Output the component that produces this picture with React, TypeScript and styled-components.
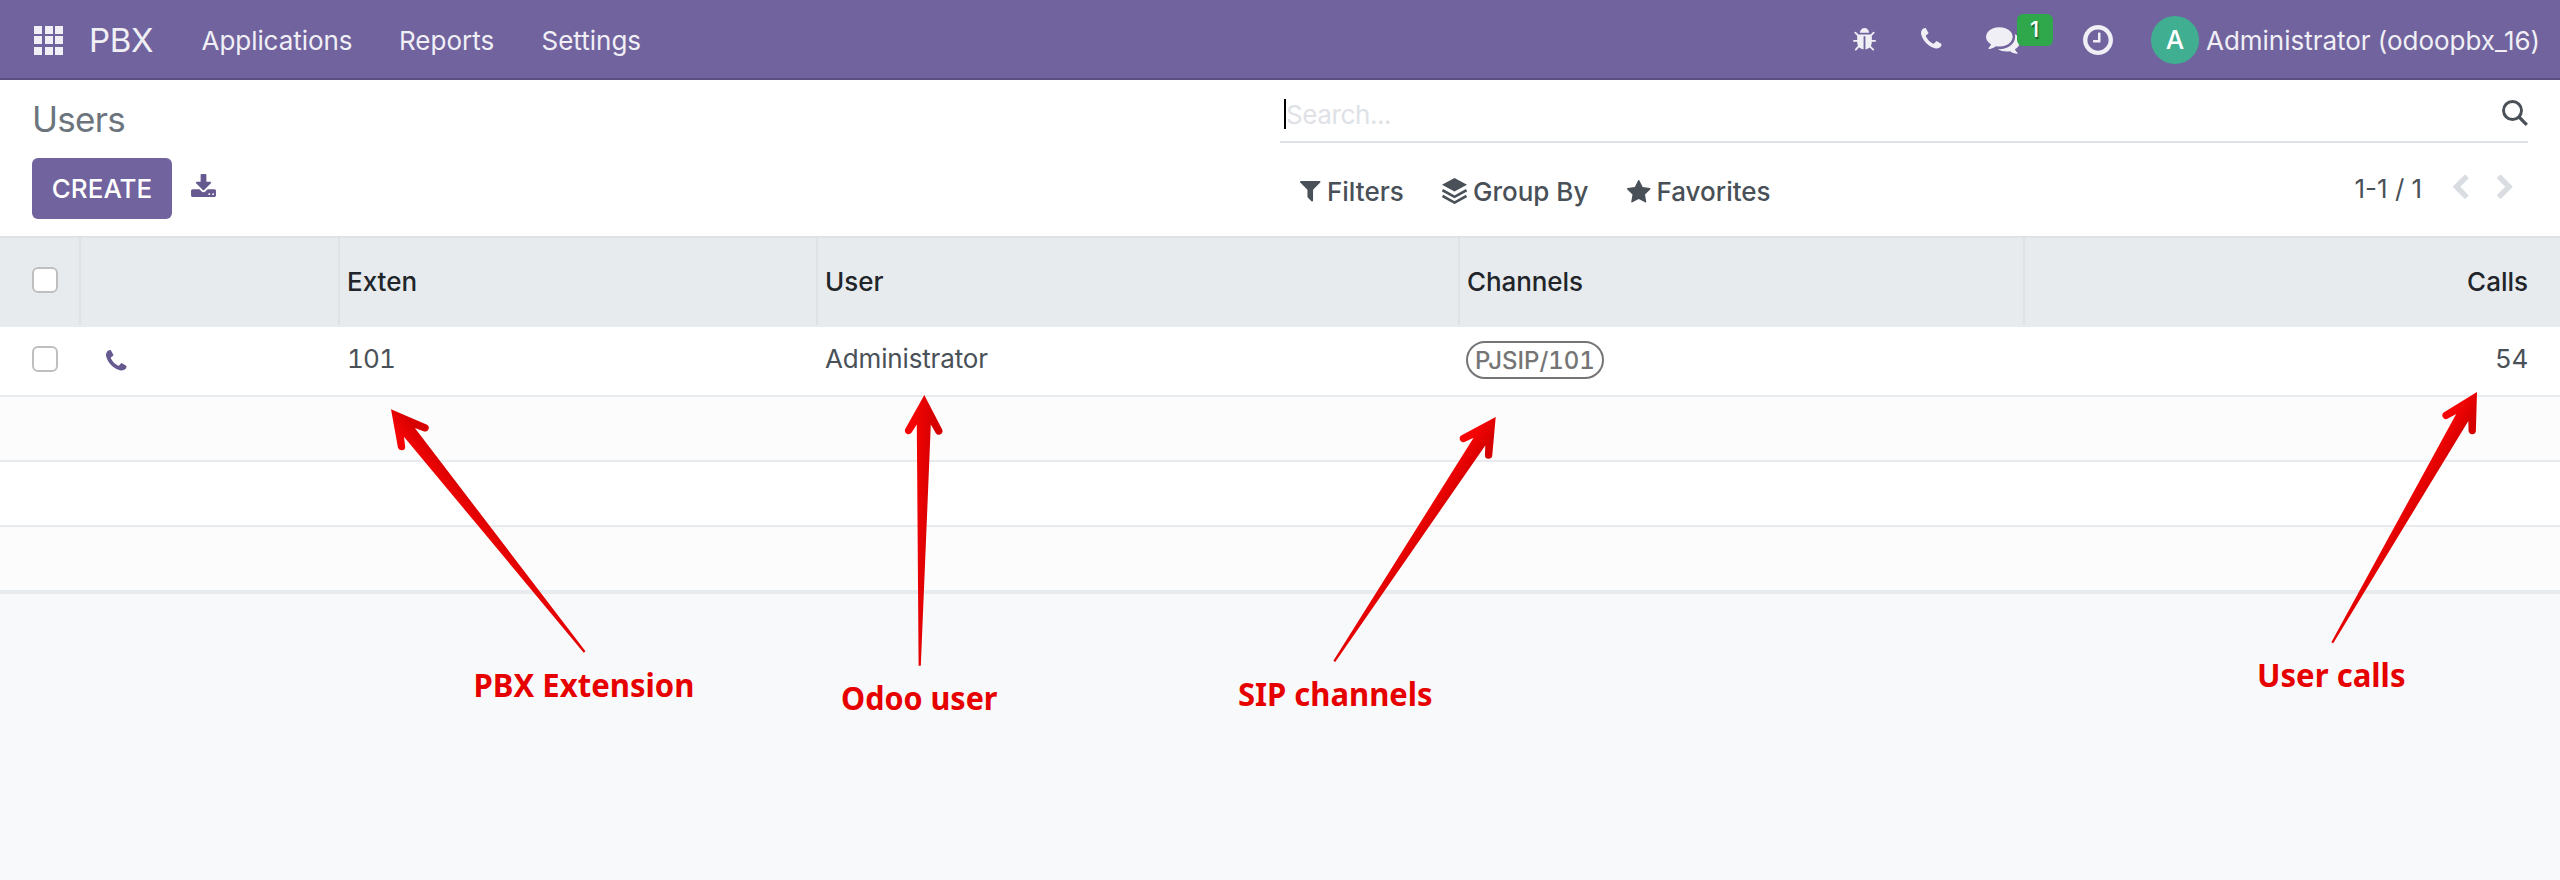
import React from "react";
import styled, { createGlobalStyle } from "styled-components";

const GlobalStyle = createGlobalStyle`
  *, *::before, *::after { box-sizing: border-box; }
  body {
    margin: 0;
    background: #f8f9fb;
    font-family: Inter, "Liberation Sans", sans-serif;
    font-size: 26px;
    color: #495057;
  }
`;

const Page = styled.div`
  position: relative;
  display: flex;
  flex-direction: column;
  height: 880px;
  overflow: hidden;
`;

const NavBar = styled.header`
  display: flex;
  align-items: center;
  height: 80px;
  padding: 2px 20px 0 34px;
  background: #71639e;
  border-bottom: 2px solid #5a4f7f;
  color: #f0eff5;
`;

const AppsGrid = styled.div`
  display: grid;
  grid-template-columns: repeat(3, 8px);
  grid-auto-rows: 8px;
  gap: 2.5px;
  width: 29px;
`;

const AppsCell = styled.span`
  background: #f0eff5;
`;

const Txt = styled.span<{ $ls?: number; $w?: number; $size?: number }>`
  white-space: nowrap;
  letter-spacing: ${(p) => p.$ls ?? 0}px;
  font-weight: ${(p) => p.$w ?? 400};
  font-size: ${(p) => p.$size ?? 26}px;
`;

const Brand = styled.div`
  width: 112.5px;
  margin-left: 26px;
`;

const Menu = styled.nav`
  display: flex;
`;

const MenuItem = styled.a<{ $width: number }>`
  width: ${(p) => p.$width}px;
`;

const Systray = styled.div`
  display: flex;
  align-items: center;
  margin-left: auto;
`;

const TrayIcon = styled.div<{ $width: number; $shift?: number }>`
  position: relative;
  display: flex;
  width: ${(p) => p.$width}px;
  margin-top: ${(p) => p.$shift ?? 0}px;
`;

const Badge = styled.span`
  position: absolute;
  left: 30.5px;
  top: -13px;
  width: 36px;
  height: 32px;
  border-radius: 6px;
  background: #2fa84b;
  color: #fff;
  font-size: 22px;
  font-weight: 500;
  line-height: 31px;
  text-align: center;
  text-shadow: 1px 2px 1px rgba(0, 0, 0, 0.45);
`;

const Avatar = styled.div`
  width: 48px;
  height: 48px;
  margin-right: 7px;
  border-radius: 50%;
  background: #40ae91;
  color: #fff;
  font-weight: 500;
  line-height: 48px;
  text-align: center;
`;

const ControlPanel = styled.section`
  display: grid;
  grid-template-columns: 1248px 1248px;
  grid-template-rows: 63px 93px;
  padding: 0 32px;
  height: 156px;
  background: #fff;
`;

const Title = styled.h1`
  margin: 0;
  padding-top: 17px;
  font-size: 35px;
  line-height: 44px;
  font-weight: 400;
  letter-spacing: -0.7px;
  color: #6c757d;
`;

const SearchBox = styled.div`
  display: flex;
  align-items: center;
  justify-content: space-between;
  border-bottom: 2px solid #dee2e6;
  padding: 5px 0 0 4px;
  color: #dee2e6;
`;

const SearchField = styled.div`
  display: flex;
  align-items: center;
  height: 30px;
  margin-top: 2px;
  border-left: 2px solid #000;
`;

const Actions = styled.div`
  display: flex;
  align-items: flex-start;
  padding-top: 15px;
`;

const CreateButton = styled.button`
  width: 140px;
  height: 61px;
  padding: 0;
  border: 0;
  border-radius: 6px;
  background: #71639e;
  color: #fff;
  font: inherit;
`;

const ExportIcon = styled.div`
  display: flex;
  margin: 16px 0 0 19px;
  color: #66598f;
`;

const FilterBar = styled.div`
  display: flex;
  align-items: center;
  height: 32px;
  margin-top: 32px;
  padding-left: 20px;
`;

const FilterItem = styled.div<{ $width: number; $icon: number }>`
  display: grid;
  grid-template-columns: ${(p) => p.$icon}px auto;
  align-items: center;
  justify-content: start;
  width: ${(p) => p.$width}px;
`;

const Pager = styled.div`
  display: flex;
  align-items: center;
  gap: 29px;
  margin: 0 15.5px 9px auto;
  color: #d9dce1;
`;

const PagerText = styled.div`
  width: 69px;
  margin-top: 4px;
  color: #495057;
`;

const ListTable = styled.div`
  border-top: 2px solid #dee2e6;
  border-bottom: 2px solid #e7ebee;
  background: #fff;
`;

const columns = "81px 259px 478px 642px 565px 1fr";

const HeadRow = styled.div`
  display: grid;
  grid-template-columns: ${columns};
  height: 89px;
  padding-bottom: 2px;
  background: #e7ebee;
  color: #212529;
`;

const HeadCell = styled.div<{ $right?: boolean; $last?: boolean }>`
  display: flex;
  align-items: center;
  justify-content: ${(p) => (p.$right ? "flex-end" : "flex-start")};
  padding: 0 ${(p) => (p.$right ? 32 : 0)}px 0 7px;
  border-right: ${(p) => (p.$last ? 0 : 2)}px solid #dee2e6;
`;

const Row = styled.div<{ $striped?: boolean; $tall?: boolean }>`
  display: grid;
  grid-template-columns: ${columns};
  height: ${(p) => (p.$tall ? 70 : 65)}px;
  border-bottom: 2px solid #e7ebee;
  background: ${(p) => (p.$striped ? "#fcfcfc" : "#fff")};
`;

const Cell = styled.div<{ $right?: boolean }>`
  display: flex;
  align-items: center;
  justify-content: ${(p) => (p.$right ? "flex-end" : "flex-start")};
  padding: 0 ${(p) => (p.$right ? 32 : 0)}px 6px 7px;
  font-feature-settings: "tnum";
`;

const Check = styled.span<{ $drop?: number }>`
  width: 26px;
  height: 26px;
  margin: ${(p) => p.$drop ?? 0}px 0 0 25px;
  border: 2px solid #bfbfbf;
  border-radius: 6px;
  background: #fff;
`;

const HeadCheck = styled(Check)`
  margin-bottom: 3px;
`;

const CallIcon = styled.div`
  display: flex;
  margin: 6px 0 0 18px;
  color: #66598f;
`;

const Tag = styled.span`
  width: 138px;
  height: 38px;
  margin: 4px 0 0 -1px;
  border: 2px solid #757575;
  border-radius: 19px;
  color: #757575;
  line-height: 34px;
  text-align: center;
`;

const Overlay = styled.svg`
  position: absolute;
  inset: 0;
  pointer-events: none;
`;

const Note = styled.text`
  font-family: "Noto Sans", sans-serif;
  font-weight: 700;
  font-size: 32px;
  fill: #e60000;
`;

// viewBox, then path, in units of the 1792-wide icon grid
const glyphs = {
  bug: ["96 128 1600 1536", "M1696 960q0 26-19 45t-45 19h-224q0 171-67 290l208 209q19 19 19 45t-19 45q-18 19-45 19t-45-19l-198-197q-5 5-15 13t-42 28.5-65 36.5-82 29-97 13v-896h-128v896q-51 0-101.5-13.5t-87-33-66-39-43.5-32.5l-15-14-183 207q-20 21-48 21-24 0-43-16-19-18-20.5-44.5t15.5-46.5l202-227q-58-114-58-274h-224q-26 0-45-19t-19-45 19-45 45-19h224v-294l-173-173q-19-19-19-45t19-45 45-19 45 19l173 173h844l173-173q19-19 45-19t45 19 19 45-19 45l-173 173v294h224q26 0 45 19t19 45zm-480-576h-640q0-133 93.5-226.5t226.5-93.5 226.5 93.5 93.5 226.5z"],
  phone: ["192 192 1408 1408", "M1600 1240q0 27-10 70.5t-21 68.5q-21 50-122 106-94 51-186 51-27 0-53-3.5t-57-12.5-47-14.5-55.5-20.5-49.5-18q-98-35-175-83-127-79-264-216t-216-264q-48-77-83-175-3-9-18-49.5t-20.5-55.5-14.5-47-12.5-57-3.5-53q0-92 51-186 56-101 106-122 25-11 68.5-21t70.5-10q14 0 21 3 18 6 53 76 11 19 30 54t35 63.5 31 53.5q3 4 17.5 25t21.5 35.5 7 28.5q0 20-28.5 50t-62 55-62 53-28.5 46q0 9 5 22.5t8.5 20.5 14 24 11.5 19q76 137 174 235t235 174q2 1 19 11.5t24 14 20.5 8.5 22.5 5q18 0 46-28.5t53-62 55-62 50-28.5q14 0 28.5 7t35.5 21.5 25 17.5q25 15 53.5 31t63.5 35 54 30q70 35 76 53 3 7 3 21z"],
  comments: ["0 256 1792 1408", "M1408 768q0 139-94 257t-256.5 186.5-353.5 68.5q-86 0-176-16-124 88-278 128-36 9-86 16h-3q-11 0-20.5-8t-11.5-21q-1-3-1-6.5t.5-6.5 2-6l2.5-5 3.5-5.5 4-5 4.5-5 4-4.5q5-6 23-25t26-29.5 22.5-29 25-38.5 20.5-44q-124-72-195-177t-71-224q0-139 94-257t256.5-186.5 353.5-68.5 353.5 68.5 256.5 186.5 94 257zm384 256q0 120-71 224.5t-195 176.5q10 24 20.5 44t25 38.5 22.5 29 26 29.5 23 25q1 1 4 4.5t4.5 5 4 5 3.5 5.5l2.5 5 2 6 .5 6.5-1 6.5q-3 14-13 22t-22 7q-50-7-86-16-154-40-278-128-90 16-176 16-271 0-472-132 58 4 88 4 161 0 309-45t264-129q125-92 192-212t67-254q0-77-23-152 129 71 204 178t75 230z"],
  clock: ["128 128 1536 1536", "M1024 544v448q0 14-9 23t-23 9h-320q-14 0-23-9t-9-23v-64q0-14 9-23t23-9h224v-352q0-14 9-23t23-9h64q14 0 23 9t9 23zm416 352q0-148-73-273t-198-198-273-73-273 73-198 198-73 273 73 273 198 198 273 73 273-73 198-198 73-273zm224 0q0 209-103 385.5t-279.5 279.5-385.5 103-385.5-103-279.5-279.5-103-385.5 103-385.5 279.5-279.5 385.5-103 385.5 103 279.5 279.5 103 385.5z"],
  download: ["64 0 1664 1536", "M1344 1344q0-26-19-45t-45-19-45 19-19 45 19 45 45 19 45-19 19-45zm256 0q0-26-19-45t-45-19-45 19-19 45 19 45 45 19 45-19 19-45zm128-224v320q0 40-28 68t-68 28h-1472q-40 0-68-28t-28-68v-320q0-40 28-68t68-28h465l135 136q58 56 136 56t136-56l136-136h464q40 0 68 28t28 68zm-325-569q17 41-14 70l-448 448q-18 19-45 19t-45-19l-448-448q-31-29-14-70 17-39 59-39h256v-448q0-26 19-45t45-19h256q26 0 45 19t19 45v448h256q42 0 59 39z"],
  filter: ["192 256 1408 1408", "M1595 295q17 41-14 70l-493 493v742q0 42-39 59-13 5-25 5-27 0-45-19l-256-256q-19-19-19-45v-486l-493-493q-31-29-14-70 17-39 59-39h1280q42 0 59 39z"],
  star: ["64 32 1664 1587", "M1728 647q0 22-26 48l-363 354 86 500q1 7 1 20 0 21-10.5 35.5t-30.5 14.5q-19 0-40-12l-449-236-449 236q-22 12-40 12-21 0-31.5-14.5t-10.5-35.5q0-6 2-20l86-500-364-354q-25-27-25-48 0-37 56-46l502-73 225-455q19-41 49-41t49 41l225 455 502 73q56 9 56 46z"],
  left: ["410 45 1036 1574", "M1427 301l-531 531 531 531q19 19 19 45t-19 45l-166 166q-19 19-45 19t-45-19l-742-742q-19-19-19-45t19-45l742-742q19-19 45-19t45 19l166 166q19 19 19 45t-19 45z"],
  right: ["346 45 1036 1574", "M1363 877l-742 742q-19 19-45 19t-45-19l-166-166q-19-19-19-45t19-45l531-531-531-531q-19-19-19-45t19-45l166-166q19-19 45-19t45 19l742 742q19 19 19 45t-19 45z"],
} as const;

function Icon({ name, width, height }: { name: keyof typeof glyphs; width: number; height: number }) {
  const [box, d] = glyphs[name];
  return (
    <svg width={width} height={height} viewBox={box} fill="currentColor" overflow="visible">
      <path d={d} />
    </svg>
  );
}

function Layers() {
  return (
    <svg width="25" height="26" viewBox="0 0 25 26" fill="currentColor">
      <path d="M12.5 0 L25 6.8 L12.5 13.6 L0 6.8 Z" />
      <path
        d="M0.5 12.2 L12.5 18.8 L24.5 12.2 M0.5 18 L12.5 24.6 L24.5 18"
        fill="none"
        stroke="currentColor"
        strokeWidth="2.6"
      />
    </svg>
  );
}

function Magnifier() {
  return (
    <svg width="26" height="26" viewBox="0 0 26 26" fill="none" stroke="#495057">
      <circle cx="10.5" cy="10.5" r="9" strokeWidth="2.9" />
      <path d="M17 17 L24.8 24.8" strokeWidth="3.2" />
    </svg>
  );
}

function Arrow({ tip, tail }: { tip: [number, number]; tail: [number, number] }) {
  const dx = tail[0] - tip[0];
  const dy = tail[1] - tip[1];
  const len = Math.hypot(dx, dy);
  const angle = (Math.atan2(dy, dx) * 180) / Math.PI - 90;
  const d = `M0 0 L18.6 34.5 A3.7 3.7 0 0 1 12.2 38 L7 29.5 L1.1 ${len} L-1.1 ${len} L-7 29.5 L-12.2 38 A3.7 3.7 0 0 1 -18.6 34.5 Z`;
  return <path d={d} fill="url(#arrowFill)" transform={`translate(${tip[0]} ${tip[1]}) rotate(${angle})`} />;
}

export default function App() {
  return (
    <Page>
      <GlobalStyle />
      <NavBar>
        <AppsGrid>
          {Array.from({ length: 9 }, (_, i) => (
            <AppsCell key={i} />
          ))}
        </AppsGrid>
        <Brand><Txt $size={33} $ls={-0.3}>PBX</Txt></Brand>
        <Menu>
          <MenuItem $width={197.5}><Txt $ls={-0.05}>Applications</Txt></MenuItem>
          <MenuItem $width={142.5}><Txt>Reports</Txt></MenuItem>
          <MenuItem $width={110}><Txt>Settings</Txt></MenuItem>
        </Menu>
        <Systray>
          <TrayIcon $width={68}><Icon name="bug" width={23} height={22} /></TrayIcon>
          <TrayIcon $width={65} $shift={-2}><Icon name="phone" width={20.5} height={20.5} /></TrayIcon>
          <TrayIcon $width={97} $shift={1}><Icon name="comments" width={34} height={27} /><Badge>1</Badge></TrayIcon>
          <TrayIcon $width={68}><Icon name="clock" width={30} height={30} /></TrayIcon>
          <Avatar>A</Avatar>
          <Txt $ls={-0.03}>Administrator (odoopbx_16)</Txt>
        </Systray>
      </NavBar>
      <ControlPanel>
        <Title>Users</Title>
        <SearchBox>
          <SearchField><Txt $ls={-0.4}>Search...</Txt></SearchField>
          <Magnifier />
        </SearchBox>
        <Actions>
          <CreateButton><Txt $w={500}>CREATE</Txt></CreateButton>
          <ExportIcon><Icon name="download" width={25} height={23} /></ExportIcon>
        </Actions>
        <FilterBar>
          <FilterItem $width={142} $icon={27}><Icon name="filter" width={20.5} height={20.5} /><Txt $w={500}>Filters</Txt></FilterItem>
          <FilterItem $width={184.5} $icon={31}><Layers /><Txt $w={500}>Group By</Txt></FilterItem>
          <FilterItem $width={150} $icon={30}><Icon name="star" width={23.5} height={22.5} /><Txt $w={500}>Favorites</Txt></FilterItem>
          <Pager>
            <PagerText><Txt>1-1 / 1</Txt></PagerText>
            <Icon name="left" width={15.5} height={23.5} />
            <Icon name="right" width={15.5} height={23.5} />
          </Pager>
        </FilterBar>
      </ControlPanel>
      <ListTable>
        <HeadRow>
          <HeadCell><HeadCheck /></HeadCell>
          <HeadCell />
          <HeadCell><Txt $w={500}>Exten</Txt></HeadCell>
          <HeadCell><Txt $w={500}>User</Txt></HeadCell>
          <HeadCell><Txt $w={500} $ls={-0.1}>Channels</Txt></HeadCell>
          <HeadCell $right $last><Txt $w={500}>Calls</Txt></HeadCell>
        </HeadRow>
        <Row $tall>
          <Cell><Check $drop={2} /></Cell>
          <Cell><CallIcon><Icon name="phone" width={20.5} height={20.5} /></CallIcon></Cell>
          <Cell><Txt $ls={-0.9}>101</Txt></Cell>
          <Cell><Txt $ls={-0.15}>Administrator</Txt></Cell>
          <Cell><Tag><Txt $size={24} $w={500}>PJSIP/101</Txt></Tag></Cell>
          <Cell $right><Txt $ls={-0.4}>54</Txt></Cell>
        </Row>
        <Row $striped />
        <Row />
        <Row $striped />
      </ListTable>
      <Overlay width="2560" height="880" viewBox="0 0 2560 880">
        <defs>
          <linearGradient id="arrowFill" gradientUnits="userSpaceOnUse" x1="-9" y1="0" x2="9" y2="0">
            <stop offset="0" stopColor="#f40404" />
            <stop offset="1" stopColor="#d60000" />
          </linearGradient>
        </defs>
        <Arrow tip={[391, 409.3]} tail={[584.6, 652]} />
        <Arrow tip={[924.3, 395]} tail={[919.7, 665.7]} />
        <Arrow tip={[1495.7, 417]} tail={[1334.3, 661.3]} />
        <Arrow tip={[2477, 392]} tail={[2332.3, 642.7]} />
        <Note x="473.5" y="697" textLength="221" lengthAdjust="spacingAndGlyphs">PBX Extension</Note>
        <Note x="841" y="710" textLength="156.5" lengthAdjust="spacingAndGlyphs">Odoo user</Note>
        <Note x="1238" y="705.5" textLength="194.5" lengthAdjust="spacingAndGlyphs">SIP channels</Note>
        <Note x="2257" y="686.5" textLength="148.5" lengthAdjust="spacingAndGlyphs">User calls</Note>
      </Overlay>
    </Page>
  );
}
